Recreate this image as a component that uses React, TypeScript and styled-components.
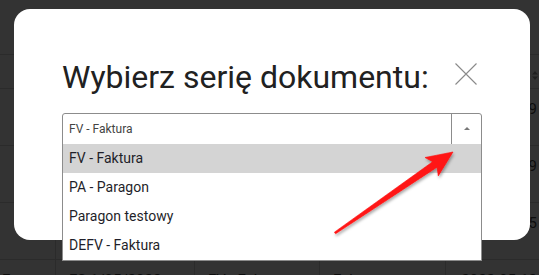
import React from "react";
import styled, { createGlobalStyle } from "styled-components";

const GlobalStyle = createGlobalStyle`
  html, body {
    margin: 0;
    padding: 0;
    width: 539px;
    height: 275px;
    overflow: hidden;
    background: #fff;
    font-family: Roboto, "Liberation Sans", Arial, sans-serif;
  }
  * { box-sizing: border-box; }
`;

/* ---------- page behind the dialog ---------- */

const Page = styled.div`
  width: 539px;
  height: 275px;
  overflow: hidden;
  display: flex;
  flex-direction: column;
`;

const TopBar = styled.div`
  height: 54px;
  flex: none;
`;

const Table = styled.div`
  display: grid;
  grid-template-columns: 55px 139px 125px 126px 1fr;
  grid-template-rows: 34px;
  grid-auto-rows: 57px;
`;

const Cell = styled.div<{ $first?: boolean; $right?: boolean }>`
  border-top: 1px solid #d7d7d7;
  border-left: ${(p) => (p.$first ? "none" : "1px solid #d7d7d7")};
  padding: 10px ${(p) => (p.$right ? "2px" : "0")} 0 ${(p) => (p.$first ? "2px" : "13px")};
  text-align: ${(p) => (p.$right ? "right" : "left")};
  font-size: 15px;
  line-height: 20px;
  color: #444;
  white-space: nowrap;
  overflow: hidden;
`;

const HeadCell = styled(Cell)`
  display: flex;
  justify-content: flex-end;
  padding-top: 16px;
  padding-right: 1px;
`;

const SortIcon = () => (
  <svg width="6" height="9" viewBox="0 0 6 9">
    <path d="M3 0 L6 3.5 H0 Z M3 9 L6 5.5 H0 Z" fill="#9a9a9a" />
  </svg>
);

const rows = [
  ["", "FV 3/05/2022", "FV - Faktura", "Faktura", "2022-05-19"],
  ["", "PA 7/05/2022", "PA - Paragon", "Paragon", "2022-05-19"],
  ["", "FV 2/05/2022", "FV - Faktura", "Faktura", "2022-05-15"],
  ["Fa", "FS 1/05/2022", "FV - Faktura", "Faktura", "2022-05-12"],
];

/* ---------- dialog ---------- */

const Overlay = styled.div`
  position: fixed;
  inset: 0;
  background: rgba(0, 0, 0, 0.8);
  padding: 9px 0 0 14px;
`;

const Modal = styled.div`
  position: relative;
  width: 516px;
  height: 231px;
  background: #fff;
  border-radius: 16px;
  padding: 49px 53px 0 48px;
`;

const Header = styled.div`
  display: flex;
  justify-content: space-between;
  align-items: flex-start;
`;

const Title = styled.h2`
  margin: 0;
  font-size: 32px;
  line-height: 38px;
  font-weight: 400;
  color: #212121;
`;

const CloseButton = styled.button`
  width: 22px;
  height: 22px;
  margin-top: 5px;
  padding: 0;
  border: none;
  background: none;
  display: flex;
  cursor: pointer;
`;

const Select = styled.div`
  position: relative;
  margin-top: 17px;
  width: 420px;
  height: 32px;
  display: flex;
  border: 1px solid #8c8c8c;
  border-radius: 3px 3px 0 0;
`;

const Value = styled.div`
  flex: 1;
  display: flex;
  align-items: center;
  padding-left: 6px;
  font-size: 12px;
  color: #444;
`;

const ArrowCell = styled.div`
  width: 30px;
  border-left: 1px solid #8c8c8c;
  display: flex;
  align-items: center;
  justify-content: center;
`;

const Caret = styled.span`
  width: 0;
  height: 0;
  border-left: 3px solid transparent;
  border-right: 3px solid transparent;
  border-bottom: 3px solid #777;
  margin-top: -1px;
`;

const Options = styled.ul`
  position: absolute;
  top: 100%;
  left: -1px;
  right: -1px;
  margin: 0;
  padding: 0;
  list-style: none;
  background: #fff;
  border: 1px solid #8c8c8c;
  border-top: none;
  z-index: 2;
`;

const Option = styled.li<{ $active?: boolean }>`
  height: 29px;
  line-height: 29px;
  padding-left: 6px;
  font-size: 14px;
  color: #1f1f2a;
  background: ${(p) => (p.$active ? "#d4d4d4" : "#fff")};
`;

const Annotation = styled.svg`
  position: fixed;
  left: 0;
  top: 0;
  width: 539px;
  height: 275px;
  pointer-events: none;
  z-index: 5;
`;

const options = ["FV - Faktura", "PA - Paragon", "Paragon testowy", "DEFV - Faktura"];

export default function App() {
  return (
    <>
      <GlobalStyle />
      <Page>
        <TopBar />
        <Table>
          {[0, 1, 2, 3, 4].map((i) => (
            <HeadCell key={i} $first={i === 0}>
              {i === 4 && <SortIcon />}
            </HeadCell>
          ))}
          {rows.map((r, ri) =>
            r.map((c, ci) => (
              <Cell key={ri + "-" + ci} $first={ci === 0} $right={ci === 4}>
                {c}
              </Cell>
            ))
          )}
        </Table>
      </Page>

      <Overlay>
        <Modal>
          <Header>
            <Title>Wybierz serię dokumentu:</Title>
            <CloseButton aria-label="Zamknij">
              <svg width="22" height="22" viewBox="0 0 22 22">
                <path d="M0.5 0.5 L21.5 21.5 M21.5 0.5 L0.5 21.5" stroke="#8a8a8a" strokeWidth="1.1" />
              </svg>
            </CloseButton>
          </Header>
          <Select>
            <Value>FV - Faktura</Value>
            <ArrowCell>
              <Caret />
            </ArrowCell>
            <Options>
              {options.map((o, i) => (
                <Option key={o} $active={i === 0}>
                  {o}
                </Option>
              ))}
            </Options>
          </Select>
        </Modal>
      </Overlay>

      <Annotation viewBox="0 0 539 275">
        <defs>
          <filter id="shadow" x="-20%" y="-20%" width="140%" height="140%">
            <feDropShadow dx="1" dy="2" stdDeviation="1.6" floodColor="#000" floodOpacity="0.35" />
          </filter>
        </defs>
        <polygon
          points="453,152 425,157.5 432.6,161.8 334.4,232.2 335.6,233.8 437,167.2 438.3,175.9"
          fill="#ff1414"
          strokeLinejoin="round"
          stroke="#ff1414"
          strokeWidth="0.6"
          filter="url(#shadow)"
        />
      </Annotation>
    </>
  );
}
